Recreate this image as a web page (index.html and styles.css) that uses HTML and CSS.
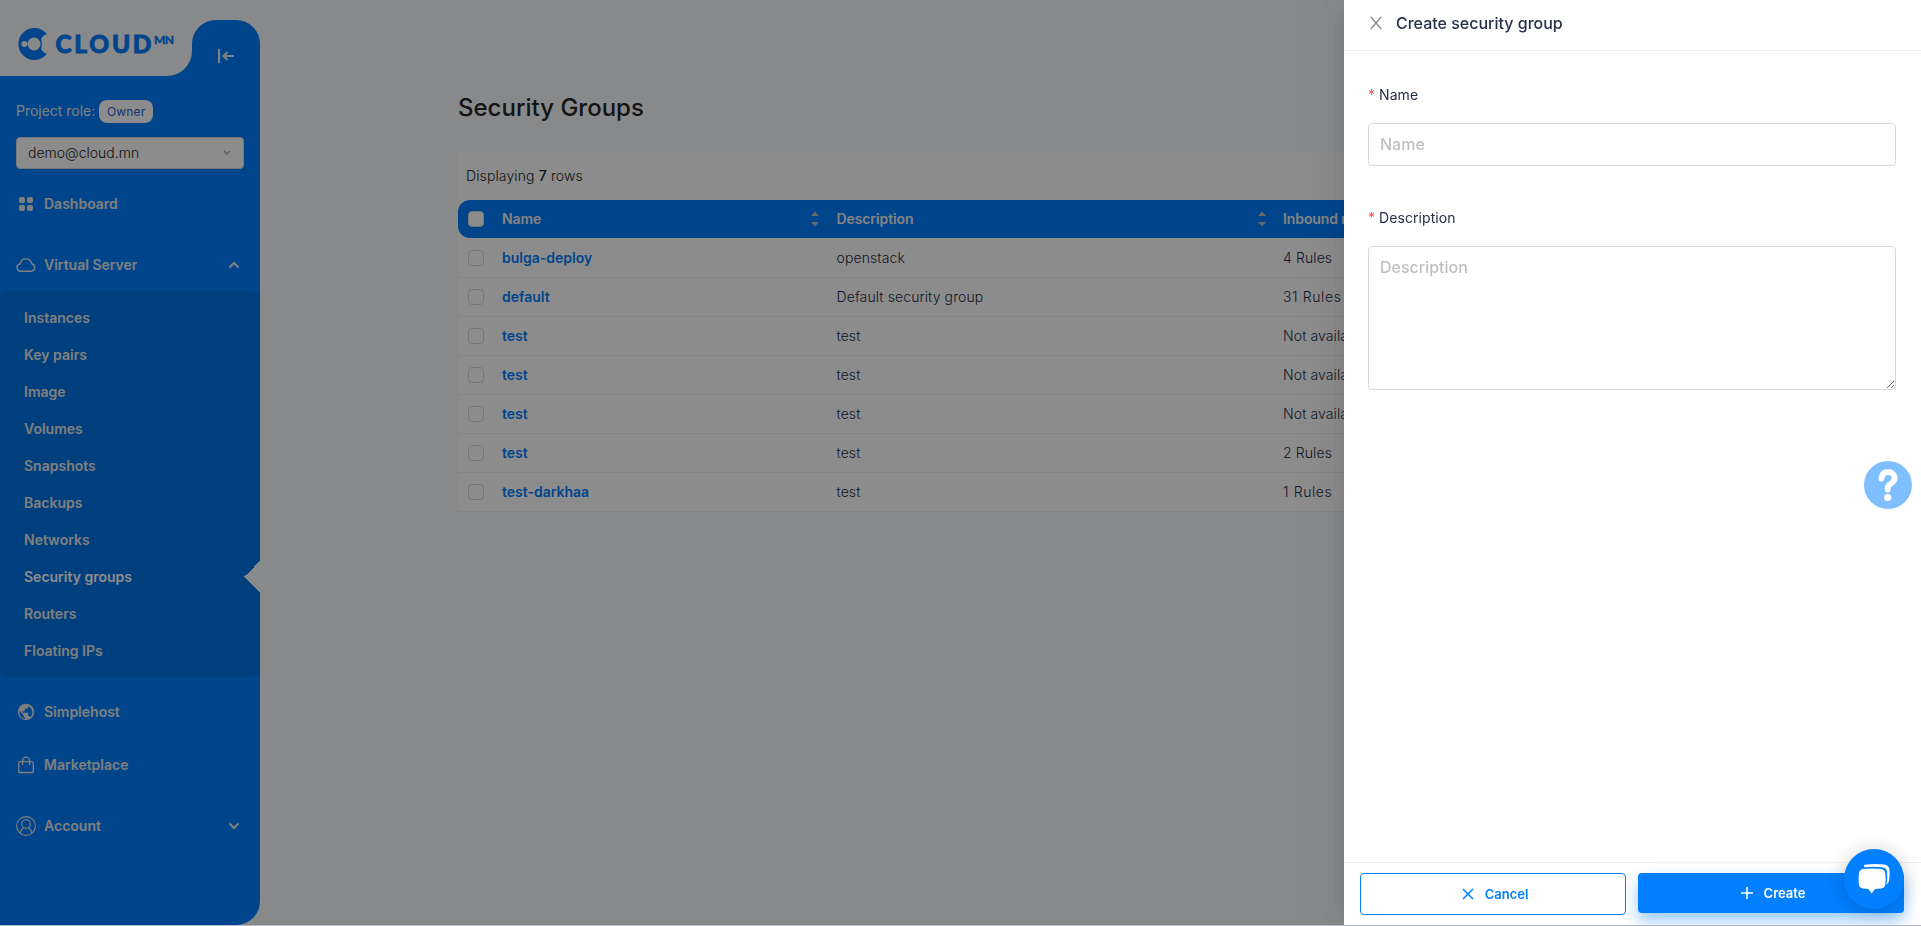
FILE: index.html
```html
<!DOCTYPE html>
<html lang="en">
<head>
<meta charset="utf-8">
<title>Security Groups</title>
<link rel="stylesheet" href="styles.css">
</head>
<body>
<div class="app">
  <aside class="sidebar">
    <div class="sidebar-top">
      <div class="brand">
        <svg class="logo" width="176" height="44" viewBox="0 0 176 44">
          <path fill="#007fff" fill-rule="evenodd" d="M47 12.200A16 16 0 1 0 47 31.800Q43 31 41 27Q41.800 24.500 41.800 22Q41.800 19.500 41 17Q43 13 47 12.200ZM27.500 22A6.500 6.500 0 1 0 40.500 22A6.500 6.500 0 1 0 27.500 22ZM21.500 22A2.900 2.900 0 1 0 27.300 22A2.900 2.900 0 1 0 21.500 22Z"/>
          <text class="logo-word" x="55.500" y="30.600" textLength="96" lengthAdjust="spacing">CLOUD</text>
          <text class="logo-sup" x="154" y="21.700" textLength="20" lengthAdjust="spacing">MN</text>
        </svg>
      </div>
      <div class="tab">
        <svg width="18" height="16" viewBox="0 0 18 16" fill="none" stroke="#eee" stroke-width="2"><path d="M2 1v14M17 8H7M10.500 4L6.500 8l4 4"/></svg>
      </div>
    </div>
    <div class="role">Project role: <span class="badge">Owner</span></div>
    <div class="select"><span>demo@cloud.mn</span>
      <svg width="8" height="6" viewBox="0 0 8 6" fill="none" stroke="#aaa" stroke-width="1.300"><path d="M1 1l3 3 3-3"/></svg>
    </div>
    <nav class="nav">
      <a class="item"><svg width="20" height="20" viewBox="0 0 20 20" fill="currentColor"><rect x="3" y="3" width="6" height="6" rx="2"/><rect x="11" y="3" width="6" height="6" rx="2"/><rect x="3" y="11" width="6" height="6" rx="2"/><rect x="11" y="11" width="6" height="6" rx="2"/></svg><span>Dashboard</span></a>
      <div class="group">
        <a class="item"><svg width="20" height="20" viewBox="0 0 20 20" fill="none" stroke="currentColor" stroke-width="1.400"><path d="M4.500 16.300h11a3.900 3.900 0 0 0 .3-7.600C15 5.600 12.800 3.900 10 3.900S5 5.800 4.200 8.700A3.850 3.850 0 0 0 4.500 16.300z"/></svg><span>Virtual Server</span>
          <svg class="caret" width="12" height="8" viewBox="0 0 12 8" fill="none" stroke="currentColor" stroke-width="2"><path d="M1.500 6.500L6 2l4.500 4.500"/></svg></a>
        <div class="submenu">
          <a>Instances</a><a>Key pairs</a><a>Image</a><a>Volumes</a><a>Snapshots</a><a>Backups</a><a>Networks</a><a class="active">Security groups</a><a>Routers</a><a>Floating IPs</a>
        </div>
      </div>
      <div class="group">
        <a class="item"><svg width="20" height="20" viewBox="0 0 20 20"><circle cx="10" cy="10" r="8.200" fill="currentColor"/><path fill="#007fff" d="M3.500 9l4 4v1c0 .9.700 1.600 1.600 1.600v1.500C5.500 16.500 2.700 12.500 3.500 9zM14.500 15.200c-.2-.7-.8-1.200-1.600-1.200h-.8v-2.400c0-.5-.4-.8-.8-.8H6.500V9.200H8c.5 0 .8-.4.800-.8V6.800h1.600c.9 0 1.600-.7 1.600-1.600v-1c4.500 1.800 6 7 2.500 11z"/></svg><span>Simplehost</span></a>
        <a class="item"><svg width="20" height="20" viewBox="0 0 20 20" fill="none" stroke="currentColor" stroke-width="1.300"><rect x="2.700" y="6.700" width="14.600" height="10.800" rx="1"/><path d="M6.500 10V5.700a3.500 3.500 0 0 1 7 0V10"/></svg><span>Marketplace</span></a>
      </div>
      <a class="item"><svg width="20" height="20" viewBox="0 0 20 20" fill="none" stroke="currentColor" stroke-width="1.100"><circle cx="10" cy="10" r="9.400"/><circle cx="10" cy="8" r="4.300"/><path d="M4.300 17c.4-2.600 1.600-4.300 3.200-5.300M15.700 17c-.4-2.600-1.600-4.300-3.200-5.300"/></svg><span>Account</span>
        <svg class="caret" width="12" height="8" viewBox="0 0 12 8" fill="none" stroke="currentColor" stroke-width="2"><path d="M1.500 1.500L6 6l4.500-4.500"/></svg></a>
    </nav>
  </aside>
  <main class="content">
    <h1>Security Groups</h1>
    <section class="panel">
      <div class="summary">Displaying <b>7</b> rows</div>
      <div class="row head"><i class="check"></i>
        <div class="cell sort">Name<svg width="8" height="16" viewBox="0 0 8 16" fill="#bfbfbf"><path d="M0 5l4-4.500L8 5zM0 11h8l-4 4.500z"/></svg></div>
        <div class="cell sort">Description<svg width="8" height="16" viewBox="0 0 8 16" fill="#bfbfbf"><path d="M0 5l4-4.500L8 5zM0 11h8l-4 4.500z"/></svg></div>
        <div class="cell">Inbound rules</div></div>
      <div class="row"><i class="check"></i><a class="cell">bulga-deploy</a><div class="cell">openstack</div><div class="cell">4 Rules</div></div>
      <div class="row"><i class="check"></i><a class="cell">default</a><div class="cell">Default security group</div><div class="cell num">31 Rules</div></div>
      <div class="row"><i class="check"></i><a class="cell">test</a><div class="cell">test</div><div class="cell">Not available</div></div>
      <div class="row"><i class="check"></i><a class="cell">test</a><div class="cell">test</div><div class="cell">Not available</div></div>
      <div class="row"><i class="check"></i><a class="cell">test</a><div class="cell">test</div><div class="cell">Not available</div></div>
      <div class="row"><i class="check"></i><a class="cell">test</a><div class="cell">test</div><div class="cell">2 Rules</div></div>
      <div class="row"><i class="check"></i><a class="cell">test-darkhaa</a><div class="cell">test</div><div class="cell num">1 Rules</div></div>
    </section>
  </main>
</div>
<div class="mask"></div>
<div class="drawer">
  <header class="drawer-head">
    <svg width="12" height="14" viewBox="0 0 12 14" fill="none" stroke="#8c8c8c" stroke-width="1.400"><path d="M.8 1l10.400 12M11.200 1L.8 13"/></svg>
    <h2>Create security group</h2>
  </header>
  <form class="form">
    <label for="name"><em>*</em>Name</label>
    <input id="name" placeholder="Name">
    <label for="desc"><em>*</em>Description</label>
    <textarea id="desc" placeholder="Description"></textarea>
  </form>
  <footer class="drawer-foot">
    <button class="btn cancel"><svg width="12" height="12" viewBox="0 0 12 12" fill="none" stroke="currentColor" stroke-width="1.500"><path d="M1 1l10 10M11 1L1 11"/></svg>Cancel</button>
    <button class="btn create"><svg width="12" height="12" viewBox="0 0 12 12" fill="none" stroke="currentColor" stroke-width="1.600"><path d="M6 0v12M0 6h12"/></svg>Create</button>
  </footer>
</div>
<div class="help"><svg width="48" height="48" viewBox="0 0 48 48" fill="none" stroke="#fff" stroke-width="5.800" stroke-linecap="round" stroke-linejoin="round"><path d="M17.500 17.500c.5-4.500 3.200-6.500 6.600-6.500 3.800 0 6.600 2.600 6.600 6.200 0 5.400-7 4.800-7 9.800v1.600"/><circle cx="23.700" cy="36.500" r="3.600" fill="#fff" stroke="none"/></svg></div>
<div class="chat"><svg width="60" height="60" viewBox="0 0 60 60"><path fill="#fff" d="M20.500 15.700Q30 14.500 40 15.500Q45 16 45.500 21Q46 27 45 32Q44.500 34.500 42.500 35.500Q43.800 29 43 22.500Q42.500 18.800 38 18.200Q29 17.300 20.500 18.200Q19 16.300 20.500 15.700Z"/><path fill="#fff" d="M19 20Q28 19 37 20Q41 20.500 41.400 24.500Q42 30 41.300 35.500Q41 39 37 39.400L31 40L27.600 44.500L24.500 40L19 39.400Q15.200 39 14.900 35.500Q14.200 30 14.900 24.500Q15.300 20.500 19 20Z"/></svg></div>
<div class="edge"></div>
</body>
</html>
```
FILE: styles.css
```css
* { box-sizing: border-box; }
body { margin: 0; height: 926px; overflow: hidden; font: 14px/20px Inter, "Open Sans", sans-serif; color: #272e48; background: #f7f9fc; }
h1, h2 { margin: 0; font-weight: 500; }
.app { display: flex; width: 1921px; height: 925px; }

.sidebar { width: 260px; height: 905px; margin-top: 20px; flex: none; background: linear-gradient(#007fff, #007fff) 0 56px / 260px 849px no-repeat; border-radius: 24px 24px 24px 0; color: #e7e7e7; }
.sidebar-top { display: flex; height: 56px; background: linear-gradient(#007fff, #007fff) 160px 30px / 50px 26px no-repeat; }
.brand { width: 192px; height: 76px; margin-top: -20px; padding-top: 22px; background: #f7f9fc; border-radius: 0 0 25px 0; }
.logo { display: block; }
.logo-word { font: 900 24.500px Lato, sans-serif; fill: #007fff; stroke: #007fff; stroke-width: .9px; }
.logo-sup { font: 900 12px Lato, sans-serif; fill: #007fff; stroke: #007fff; stroke-width: .3px; }
.tab { width: 68px; height: 56px; display: flex; padding: 28px 0 0 25px; background: #007fff; border-radius: 24px 24px 0 0; }
.role { display: flex; align-items: center; gap: 4px; height: 23px; margin: 24px 16px 0; padding-bottom: 1px; white-space: nowrap; letter-spacing: -.02px; }
.badge { display: block; width: 54px; height: 23px; margin-top: 1px; border-radius: 8px; background: #fff; color: #2460d8; font-size: 12px; line-height: 23px; text-align: center; letter-spacing: .15px; }
.select { display: flex; justify-content: space-between; align-items: center; height: 32px; margin: 14px 16px 8px; padding: 0 12px 0 11px; border: 1px solid #d9d9d9; border-radius: 4px; background: #fff; color: #262626; font-weight: 350; }
.nav { display: flex; flex-direction: column; gap: 8px; font-weight: 600; }
.item { display: flex; align-items: center; height: 53px; padding: 0 20px 0 16px; }
.item span { margin-left: 8px; flex: 1; }
.submenu { padding: 8px 0; border-radius: 8px; background: #0073e6; }
.submenu a { display: block; height: 37px; line-height: 37px; padding-left: 24px; }
.submenu .active { color: #fff; background: conic-gradient(from 45deg at 0 50%, #f7f9fc 90deg, transparent 0) right / 16px 32px no-repeat; }

.content { flex: 1; padding: 92px 0 0 198px; }
h1 { font-size: 24px; line-height: 32px; color: #262626; font-weight: 550; letter-spacing: 0; }
.panel { margin-top: 28px; width: 1265px; background: #fff; border-radius: 4px; }
.summary { height: 48px; padding-left: 8px; line-height: 48px; color: #262626; font-weight: 300; letter-spacing: .12px; }
.summary b { font-weight: 500; }
.row { display: grid; grid-template-columns: 36px 334.500px 446.500px 1fr; height: 39px; align-items: center; border-bottom: 1px solid #f0f0f0; font-weight: 300; letter-spacing: .1px; }
.cell { padding-left: 8px; }
.num { letter-spacing: .6px; }
a.cell { color: #007fff; font-weight: 600; letter-spacing: 0; }
.check { width: 16px; height: 16px; margin-left: 10px; border: 1px solid #d9d9d9; border-radius: 4px; background: #fff; }
.head { height: 38px; margin-bottom: 1px; border: 0; border-radius: 12px 12px 0 12px; background: #007fff; color: #eee; font-weight: 600; letter-spacing: -.1px; }
.sort { display: flex; justify-content: space-between; align-items: center; height: 22px; padding-right: 8.500px; border-right: 1px solid #0078f0; }

.mask { position: fixed; inset: 0; background: rgba(0, 0, 0, .45); }
.drawer { position: fixed; top: 0; right: 0; width: 577px; height: 925px; display: flex; flex-direction: column; background: #fff; box-shadow: -6px 0 16px -8px rgba(0, 0, 0, .08), -9px 0 28px rgba(0, 0, 0, .05), -12px 0 48px 16px rgba(0, 0, 0, .03); }
.drawer-head { display: flex; align-items: center; gap: 14px; height: 51px; padding: 0 26px 4px; border-bottom: 1px solid #f0f0f0; }
h2 { font-size: 16px; line-height: 22px; }
.form { flex: 1; display: flex; flex-direction: column; padding: 34px 24px 0; }
label { display: flex; height: 20px; margin-bottom: 18px; letter-spacing: .08px; }
label em { font-style: normal; color: #ff4d4f; width: 11px; }
input, textarea { width: 528px; border: 1px solid #d9d9d9; border-radius: 4px; padding: 8px 11px 10px; font: 500 16px/24px Inter, sans-serif; background: #fff; outline: 0; }
input { height: 43px; margin-bottom: 42px; }
textarea { height: 144px; }
::placeholder { color: #bfbfbf; opacity: 1; }
.drawer-foot { display: flex; align-items: flex-start; gap: 12px; height: 63px; padding: 10px 16px 0; border-top: 1px solid #f0f0f0; overflow: hidden; }
.btn { flex: none; width: 266px; height: 42px; display: flex; justify-content: center; align-items: center; gap: 11px; padding: 0 0 1px 4px; border-radius: 4px; font: 600 13px Inter, sans-serif; }
.cancel { border: 1px solid #007fff; background: #fff; color: #007fff; }
.create { height: 40px; border: 0; background: #007fff; color: #fff; box-shadow: 0 8px 16px rgba(0, 127, 255, .4); }
.help { position: fixed; left: 1864px; top: 461px; width: 48px; height: 48px; border-radius: 50%; background: #7fbfff; }
.chat { position: fixed; left: 1844px; top: 849px; width: 60px; height: 60px; border-radius: 50%; background: #007fff; box-shadow: 0 2px 20px rgba(0, 0, 0, .2); }
.edge { position: fixed; left: 0; right: 0; bottom: 0; height: 1px; background: #b4b8c0; }
```
